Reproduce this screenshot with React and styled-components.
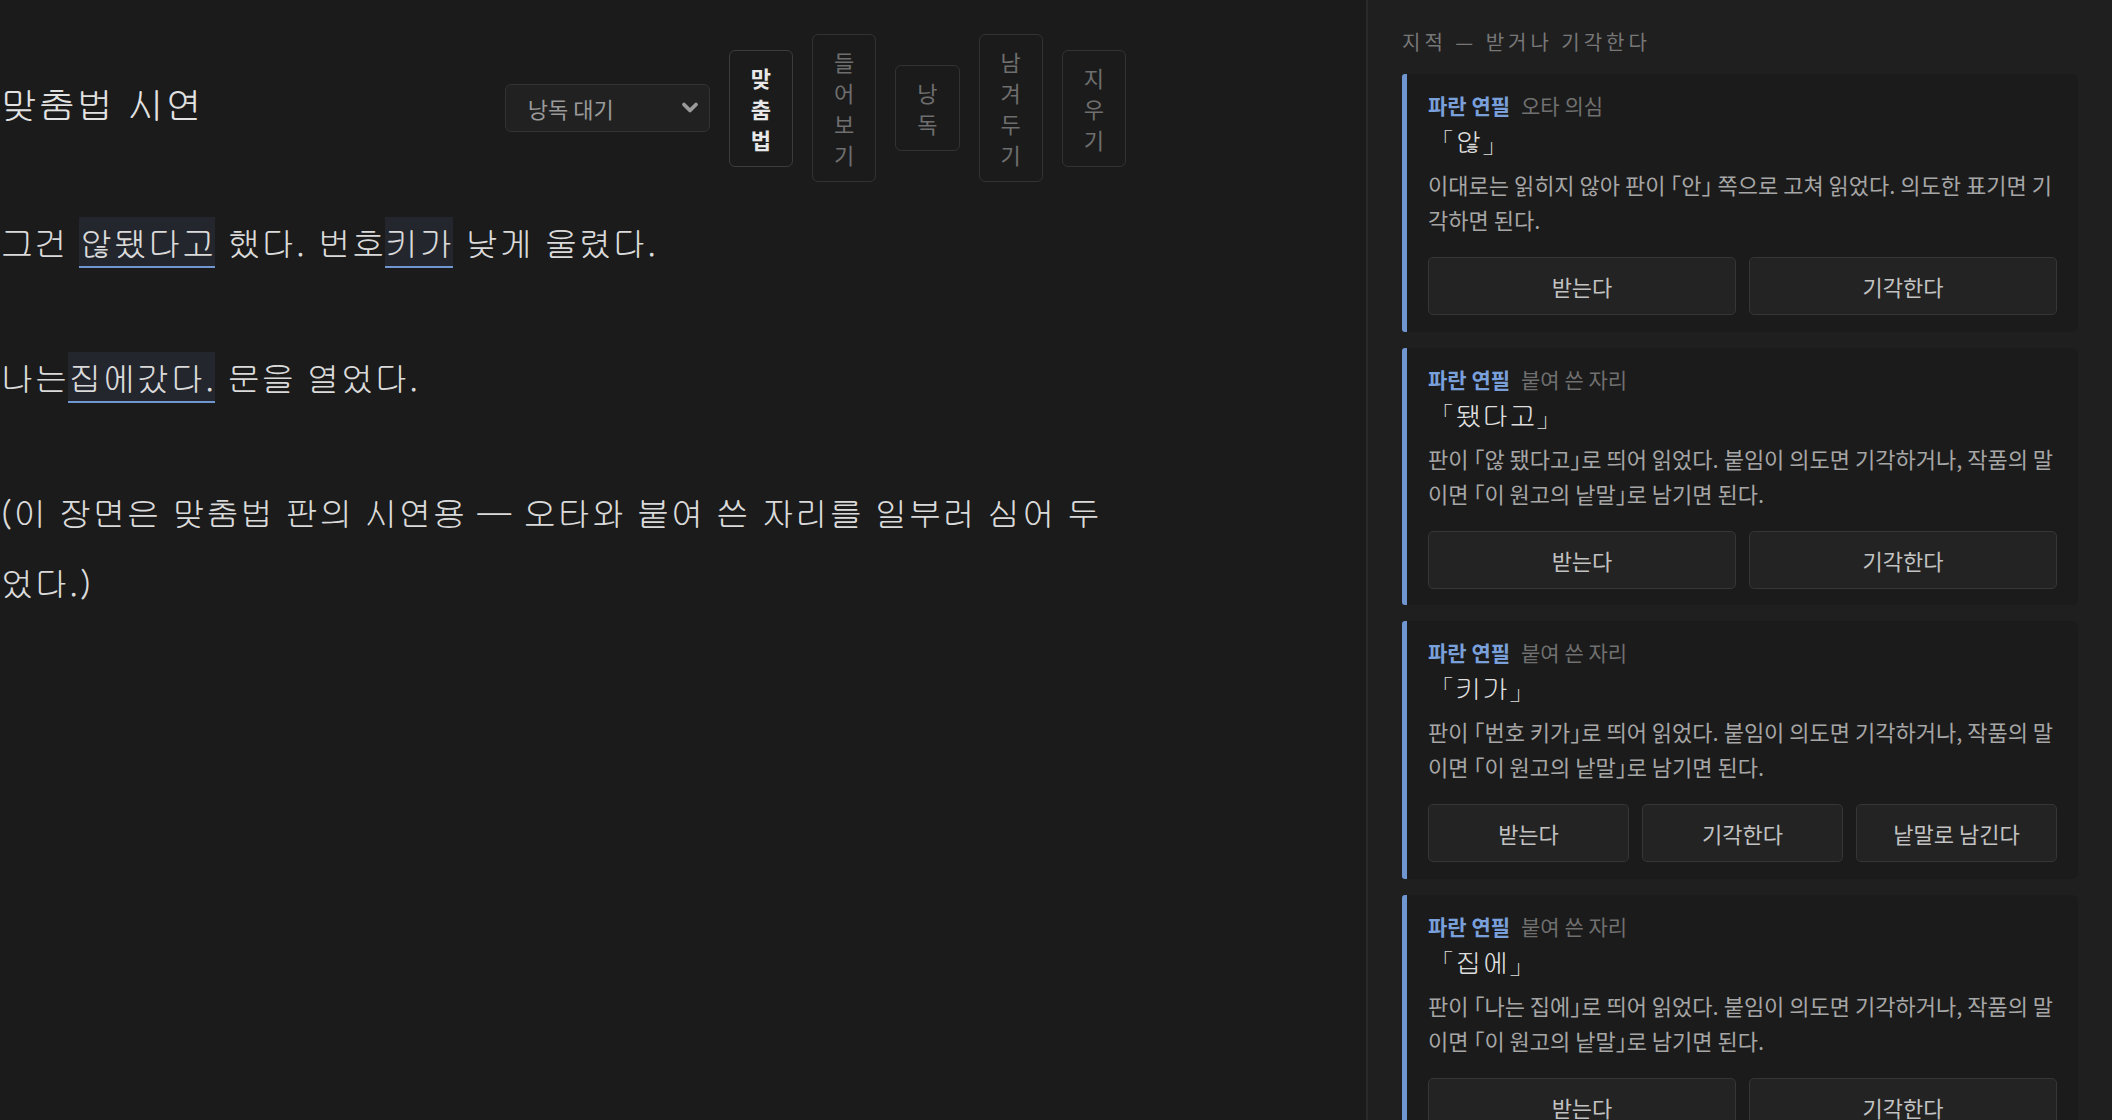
import React from "react";
import styled, { createGlobalStyle } from "styled-components";

const Global = createGlobalStyle`
  html, body { margin: 0; padding: 0; background: #1b1b1b; }
  body { overflow: hidden; }
  * { box-sizing: border-box; }
`;

const SERIF = `Gulim, Dotum, "Liberation Serif", serif`;
const SANS = `"Noto Sans CJK KR", "Noto Sans", sans-serif`;

const Shell = styled.div`
  display: flex;
  width: 100vw;
  height: 100vh;
  overflow: hidden;
  background: #1b1b1b;
`;

const Main = styled.main`
  flex: 1;
  min-width: 0;
  padding-top: 34px;
`;

const Column = styled.div`
  width: 1126px;
`;

const Header = styled.header`
  display: flex;
  align-items: center;
  justify-content: space-between;
`;

const Title = styled.h1`
  margin: 0 0 10px;
  font-family: ${SERIF};
  font-size: 38px;
  font-weight: 400;
  color: #e2e2e2;
`;

const Controls = styled.div`
  display: flex;
  align-items: center;
  gap: 19px;
`;

const SelectBox = styled.div`
  width: 205px;
  height: 48px;
  display: flex;
  align-items: center;
  justify-content: space-between;
  padding: 0 10px 0 22px;
  border: 1.5px solid #333;
  border-radius: 6px;
  background: #212121;
  font-family: ${SANS};
  font-size: 22px;
  color: #9a9a9a;
`;

const ModeButton = styled.button`
  width: min-content;
  padding: 11px 21px;
  border: 1.5px solid ${(p) => (p.$active ? "#3c3c3c" : "#333")};
  border-radius: 6px;
  background: transparent;
  font-family: ${SANS};
  font-size: 22px;
  line-height: 31px;
  font-weight: ${(p) => (p.$active ? 700 : 400)};
  color: ${(p) => (p.$active ? "#e8e8e8" : "#6e6e6e")};
`;

const Prose = styled.div`
  margin-top: 25px;
  font-family: ${SERIF};
  font-size: 34px;
  line-height: 70px;
  color: #dadada;
`;

const Para = styled.p`
  margin: 0 0 65px;
`;

const Mark = styled.span`
  background: #23262d;
  border-bottom: 2px solid #7096d1;
`;

const Side = styled.aside`
  width: 746px;
  flex-shrink: 0;
  height: 100%;
  overflow: hidden;
  background: #1f1f1f;
  border-left: 2px solid #2a2a2a;
  padding: 28px 34px 0 34px;
`;

const SideTitle = styled.div`
  font-family: ${SANS};
  font-size: 20px;
  line-height: 28px;
  letter-spacing: 0.2em;
  color: #777;
  margin-bottom: 18px;
`;

const CardList = styled.div`
  display: flex;
  flex-direction: column;
  gap: 16px;
`;

const Card = styled.section`
  background: #1b1b1b;
  border-left: 5px solid #7096d1;
  border-radius: 3px 6px 6px 3px;
  padding: 17px 21px 16.5px 21px;
`;

const LabelRow = styled.div`
  display: flex;
  align-items: baseline;
  gap: 11px;
  font-family: ${SANS};
  font-size: 21px;
  line-height: 28px;
`;

const Pen = styled.span`
  color: #7aa0dc;
  font-weight: 700;
`;

const Kind = styled.span`
  color: #707070;
`;

const Quote = styled.div`
  margin-top: 4px;
  font-family: ${SERIF};
  font-size: 27px;
  line-height: 36px;
  color: #dedede;
`;

const Desc = styled.p`
  margin: 8px 0 0;
  font-family: ${SANS};
  font-size: 22px;
  line-height: 35px;
  color: #a6a6a6;
  font-feature-settings: "halt";
`;

const Actions = styled.div`
  display: flex;
  gap: 13px;
  margin-top: 20px;
`;

const ActionButton = styled.button`
  flex: 1;
  height: 58px;
  border: 1.5px solid #363636;
  border-radius: 5px;
  background: #232323;
  font-family: ${SANS};
  font-size: 22px;
  color: #c2c2c2;
`;

const Chevron = () => (
  <svg width="18" height="14" viewBox="0 0 18 14" aria-hidden="true">
    <polyline
      points="3,3.5 9,9.5 15,3.5"
      fill="none"
      stroke="#9a9a9a"
      strokeWidth="3.8"
      strokeLinecap="round"
      strokeLinejoin="round"
    />
  </svg>
);

const SPACING = "판이 ";
const TAIL = " 붙임이 의도면 기각하거나, 작품의 말이면 「이 원고의 낱말」로 남기면 된다.";
const cards = [
  {
    kind: "오타 의심",
    quote: "「않」",
    desc: "이대로는 읽히지 않아 판이 「안」 쪽으로 고쳐 읽었다. 의도한 표기면 기각하면 된다.",
    actions: ["받는다", "기각한다"],
  },
  {
    kind: "붙여 쓴 자리",
    quote: "「됐다고」",
    desc: SPACING + "「않 됐다고」로 띄어 읽었다." + TAIL,
    actions: ["받는다", "기각한다"],
  },
  {
    kind: "붙여 쓴 자리",
    quote: "「키가」",
    desc: SPACING + "「번호 키가」로 띄어 읽었다." + TAIL,
    actions: ["받는다", "기각한다", "낱말로 남긴다"],
  },
  {
    kind: "붙여 쓴 자리",
    quote: "「집에」",
    desc: SPACING + "「나는 집에」로 띄어 읽었다." + TAIL,
    actions: ["받는다", "기각한다"],
  },
  {
    kind: "붙여 쓴 자리",
    quote: "「갔다」",
    desc: SPACING + "「집에 갔다」로 띄어 읽었다.",
    actions: ["받는다", "기각한다"],
  },
];

const modes = [
  { label: "맞춤법", active: true },
  { label: "들어보기" },
  { label: "낭독" },
  { label: "남겨두기" },
  { label: "지우기" },
];

export default function App() {
  return (
    <>
      <Global />
      <Shell>
        <Main>
          <Column>
            <Header>
              <Title>맞춤법 시연</Title>
              <Controls>
                <SelectBox>
                  <span>낭독 대기</span>
                  <Chevron />
                </SelectBox>
                {modes.map((m) => (
                  <ModeButton key={m.label} $active={m.active}>
                    {m.label}
                  </ModeButton>
                ))}
              </Controls>
            </Header>
            <Prose>
              <Para>
                그건 <Mark>않</Mark><Mark>됐다고</Mark> 했다. 번호<Mark>키가</Mark> 낮게 울렸다.
              </Para>
              <Para>
                나는<Mark>집에</Mark><Mark>갔다.</Mark> 문을 열었다.
              </Para>
              <Para>
                (이 장면은 맞춤법 판의 시연용 — 오타와 붙여 쓴 자리를 일부러 심어 두었다.)
              </Para>
            </Prose>
          </Column>
        </Main>
        <Side>
          <SideTitle>지적 — 받거나 기각한다</SideTitle>
          <CardList>
            {cards.map((c, i) => (
              <Card key={i}>
                <LabelRow>
                  <Pen>파란 연필</Pen>
                  <Kind>{c.kind}</Kind>
                </LabelRow>
                <Quote>{c.quote}</Quote>
                <Desc>{c.desc}</Desc>
                <Actions>
                  {c.actions.map((a) => (
                    <ActionButton key={a}>{a}</ActionButton>
                  ))}
                </Actions>
              </Card>
            ))}
          </CardList>
        </Side>
      </Shell>
    </>
  );
}
